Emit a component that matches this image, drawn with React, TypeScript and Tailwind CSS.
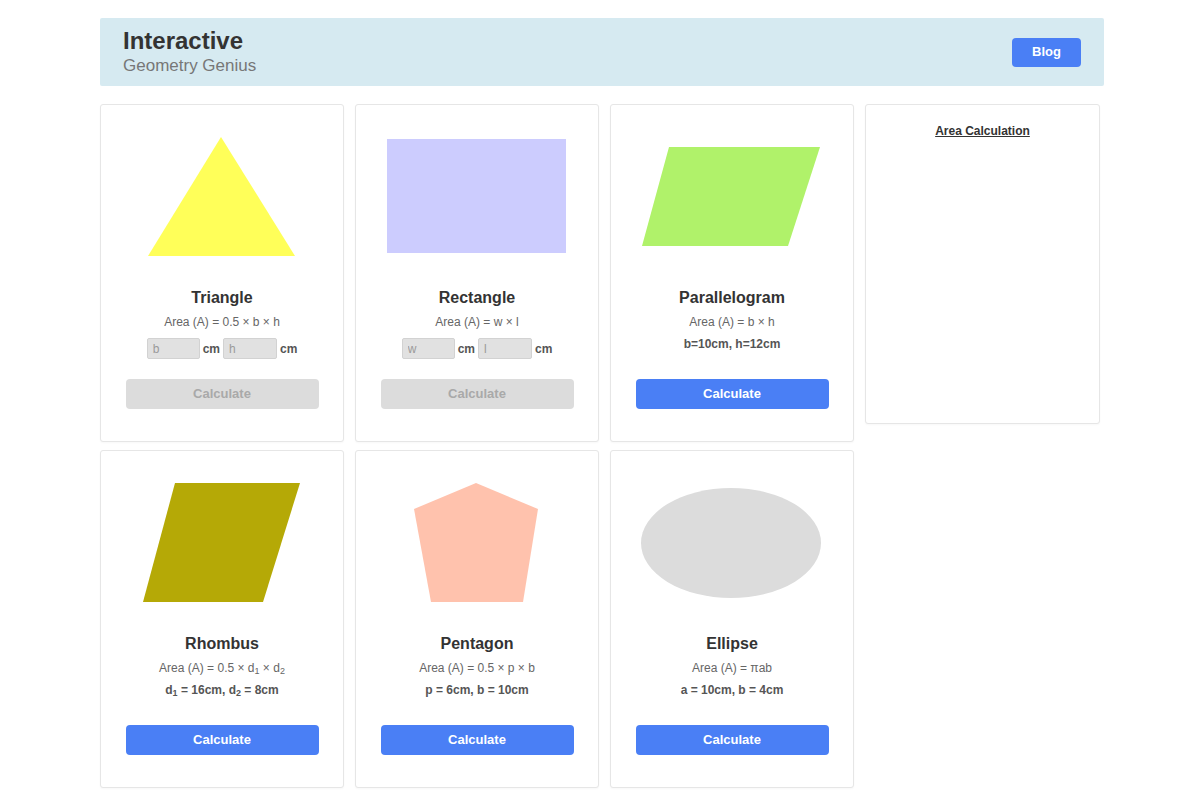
import React from 'react';

type Shape = {
  name: string;
  formula: React.ReactNode;
  params?: React.ReactNode;
  inputs?: [string, string];
  svg: React.ReactNode;
};

const shapes: Shape[] = [
  {
    name: 'Triangle',
    formula: 'Area (A) = 0.5 × b × h',
    inputs: ['b', 'h'],
    svg: <polygon points="48,135 121,16 195,135" fill="#ffff59" />,
  },
  {
    name: 'Rectangle',
    formula: 'Area (A) = w × l',
    inputs: ['w', 'l'],
    svg: <rect x="32" y="18" width="179" height="114" fill="#ccccfe" />,
  },
  {
    name: 'Parallelogram',
    formula: 'Area (A) = b × h',
    params: 'b=10cm, h=12cm',
    svg: <polygon points="59,26 210,26 178,125 32,125" fill="#b0f26a" />,
  },
  {
    name: 'Rhombus',
    formula: (
      <>
        Area (A) = 0.5 × d<sub className="text-[9px]">1</sub> × d<sub className="text-[9px]">2</sub>
      </>
    ),
    params: (
      <>
        d<sub className="text-[9px]">1</sub> = 16cm, d<sub className="text-[9px]">2</sub> = 8cm
      </>
    ),
    svg: <polygon points="75,16 200,16 163,135 43,135" fill="#b5a906" />,
  },
  {
    name: 'Pentagon',
    formula: 'Area (A) = 0.5 × p × b',
    params: 'p = 6cm, b = 10cm',
    svg: <polygon points="121,16 183,42 168,135 76,135 59,42" fill="#ffc2ad" />,
  },
  {
    name: 'Ellipse',
    formula: 'Area (A) = πab',
    params: 'a = 10cm, b = 4cm',
    svg: <ellipse cx="121" cy="76" rx="90" ry="55" fill="#dcdcdc" />,
  },
];

const ShapeCard: React.FC<{ shape: Shape }> = ({ shape }) => {
  const disabled = !!shape.inputs;
  return (
    <div className="w-[244px] h-[338px] bg-white border border-[#e6e6e6] rounded-[3px] shadow-[0_1px_2px_rgba(0,0,0,0.03)] flex flex-col items-center">
      <svg width="244" height="150" viewBox="0 0 244 150" className="mt-[16px] -ml-px">
        {shape.svg}
      </svg>
      <h3 className="mt-[16px] text-[16px] leading-[22px] font-bold text-[#333]">{shape.name}</h3>
      <p className="mt-[5px] text-[12px] leading-[16px] text-[#666]">{shape.formula}</p>
      <div className="h-[39px] flex items-start justify-center">
        {shape.inputs ? (
          <div className="mt-[8px] flex items-center gap-[3px] text-[12px] font-bold text-[#555]">
            <input
              placeholder={shape.inputs[0]}
              className="w-[53px] h-[21px] px-[5px] bg-[#e1e1e1] border border-[#d2d2d2] rounded-[2px] text-[12px] font-normal placeholder:text-[#9a9a9a] outline-none"
            />
            <span>cm</span>
            <input
              placeholder={shape.inputs[1]}
              className="w-[54px] h-[21px] px-[5px] bg-[#e1e1e1] border border-[#d2d2d2] rounded-[2px] text-[12px] font-normal placeholder:text-[#9a9a9a] outline-none"
            />
            <span>cm</span>
          </div>
        ) : (
          <p className="mt-[6px] text-[12px] leading-[16px] font-bold text-[#555]">{shape.params}</p>
        )}
      </div>
      <button
        className={`mt-[10px] w-[193px] h-[30px] rounded-[4px] text-[13px] font-bold ${
          disabled ? 'bg-[#dcdcdc] text-[#a9a9a9]' : 'bg-[#4a7ff5] text-white'
        }`}
      >
        Calculate
      </button>
    </div>
  );
};

const App: React.FC = () => {
  return (
    <div className="min-h-[796px] bg-white font-['Liberation_Sans',Arial,sans-serif]">
      <div className="ml-[100px] w-[1004px] pt-[18px]">
        {/* Header */}
        <div className="h-[68px] bg-[#d6eaf1] rounded-[2px] pl-[23px] pr-[23px] flex items-center justify-between">
          <div>
            <h1 className="text-[24px] leading-[26px] font-bold text-[#333]">Interactive</h1>
            <p className="mt-[1px] text-[17px] leading-[22px] text-[#777]">Geometry Genius</p>
          </div>
          <button className="w-[69px] h-[29px] rounded-[4px] bg-[#4a7ff5] text-white text-[13px] font-bold">
            Blog
          </button>
        </div>

        {/* Content */}
        <div className="mt-[18px] flex gap-[11px] items-start">
          <div className="grid grid-cols-[244px_244px_244px] gap-x-[11px] gap-y-[8px]">
            {shapes.map((s) => (
              <ShapeCard key={s.name} shape={s} />
            ))}
          </div>
          <div className="w-[235px] h-[320px] bg-white border border-[#e6e6e6] rounded-[3px] shadow-[0_1px_2px_rgba(0,0,0,0.03)] pt-[13px] text-center">
            <span className="text-[12px] font-bold text-[#333] underline">Area Calculation</span>
          </div>
        </div>
      </div>
    </div>
  );
};

export default App;
